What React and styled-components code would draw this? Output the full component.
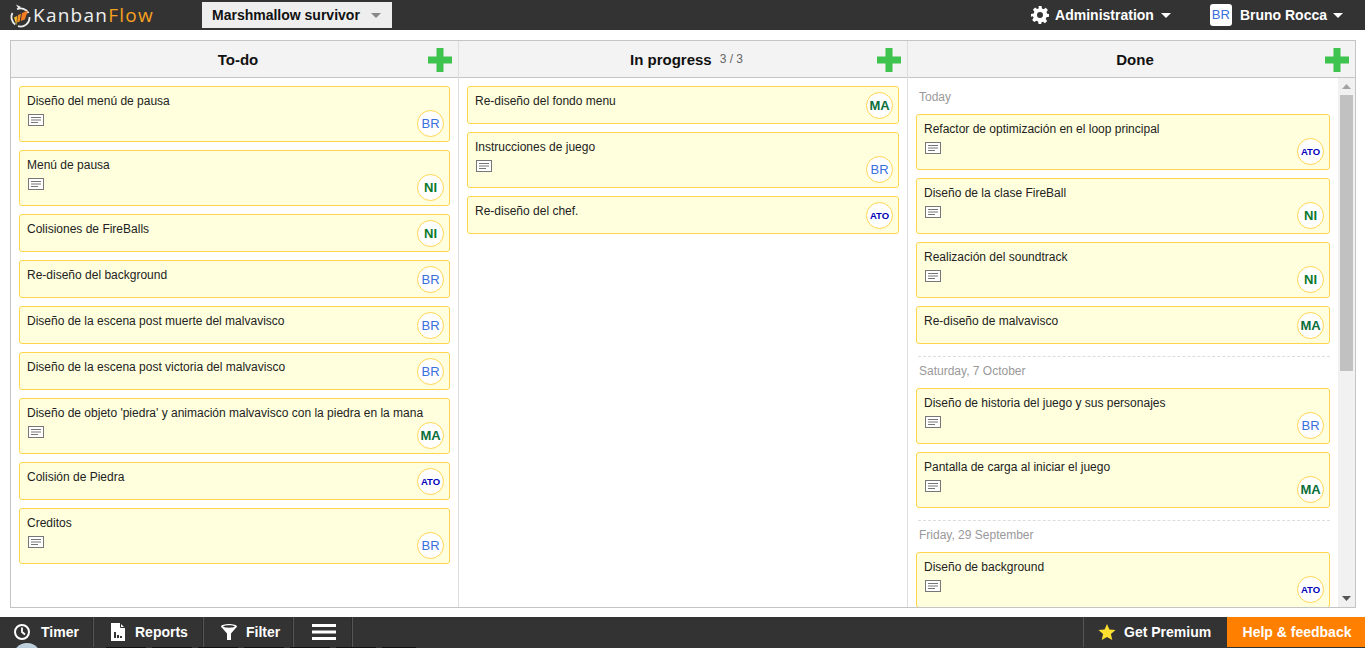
import React from "react";
import styled, { createGlobalStyle } from "styled-components";

const Global = createGlobalStyle`
  html, body { margin: 0; padding: 0; height: 100%; overflow: hidden; background: #fff; }
  body { font-family: "Liberation Sans", Arial, sans-serif; }
`;
const Page = styled.div`display:flex;flex-direction:column;height:648px;width:1365px;overflow:hidden;`;
const TopBar = styled.header`display:flex;align-items:center;height:30px;background:#333;flex:none;`;
const Logo = styled.div`display:flex;align-items:center;width:202px;padding-left:10px;box-sizing:border-box;`;
const LogoWord = styled.span`font:400 19px/30px "Open Sans",sans-serif;color:#eee;letter-spacing:1.25px;margin-left:2px;`;
const LogoFlow = styled.span`color:#f7a11e;`;
const BoardSelect = styled.div`display:flex;align-items:center;width:190px;height:26px;background:#eee;color:#111;font:bold 14px "Liberation Sans",sans-serif;padding-left:10px;box-sizing:border-box;`;
const Caret = styled.i`display:inline-block;width:0;height:0;border-left:5px solid transparent;border-right:5px solid transparent;border-top:5px solid ${p=>p.$c||"#fff"};margin-left:${p=>p.$m||6}px;`;
const Spacer = styled.div`flex:1;`;
const TopItem = styled.div`display:flex;align-items:center;color:#fff;font:bold 14px "Liberation Sans",sans-serif;margin-right:${p=>p.$mr||0}px;`;
const UserTile = styled.div`width:22px;height:22px;border-radius:3px;background:#fff;color:#3a6fdc;font:13px/22px "Liberation Sans",sans-serif;text-align:center;margin-right:8px;`;

const Board = styled.main`flex:1;margin:10px 9px 9px 10px;border:1px solid #c4c4c4;display:grid;grid-template-columns:447px 449px 1fr;min-height:0;overflow:hidden;`;
const Column = styled.section`display:flex;flex-direction:column;min-width:0;min-height:0;border-left:${p=>p.$first?"none":"1px solid #ddd"};`;
const ColHead = styled.div`position:relative;flex:none;height:36px;padding-left:7px;background:#f3f3f3;border-bottom:1px solid #c4c4c4;display:flex;align-items:center;justify-content:center;font:bold 15px "Liberation Sans",sans-serif;color:#111;`;
const Count = styled.span`font:12px "Liberation Sans",sans-serif;color:#666;margin-left:8px;`;
const Plus = styled.svg`position:absolute;right:6px;top:7px;width:24px;height:24px;`;
const ColBody = styled.div`flex:1;display:flex;min-height:0;overflow:hidden;`;
const List = styled.div`flex:1;min-width:0;display:flex;flex-direction:column;gap:8px;padding:8px 8px 0;box-sizing:border-box;`;
const Card = styled.article`position:relative;flex:none;box-sizing:border-box;height:${p=>p.$tall?56:38}px;background:#ffffdd;border:1px solid #ffd54f;border-radius:3px;padding:7px 7px;font:12px/14px "Liberation Sans",sans-serif;color:#222;`;
const NoteIcon = styled.svg`display:block;width:16px;height:12px;margin:6px 0 0 1px;`;
const Avatar = styled.div`position:absolute;right:5px;bottom:4px;box-sizing:border-box;width:27px;height:27px;border-radius:50%;background:#fff;border:1px solid #ffd54f;display:flex;align-items:center;justify-content:center;font:${p=>p.$w||"normal"} ${p=>p.$s||13}px "Liberation Sans",sans-serif;color:${p=>p.$c};`;
const DayLabel = styled.div`flex:none;font:12px/12px "Liberation Sans",sans-serif;color:#999;padding-left:3px;height:15px;margin-top:${p=>p.$first?5:0}px;`;
const Rule = styled.div`flex:none;border-top:1px dashed #ddd;margin:4px 0 0 2px;`;
const Scroll = styled.div`flex:none;width:17px;background:#f1f1f1;display:flex;flex-direction:column;align-items:center;`;
const ScrollBtn = styled.div`flex:none;height:17px;display:flex;align-items:center;justify-content:center;`;
const Thumb = styled.div`flex:none;width:13px;height:276px;background:#c1c1c1;`;
const ScrollGap = styled.div`flex:1;`;

const BottomBar = styled.footer`position:relative;flex:none;box-sizing:border-box;height:31px;padding-bottom:1px;background:#333;display:flex;align-items:stretch;color:#fff;font:bold 14px "Liberation Sans",sans-serif;`;
const BarItem = styled.div`display:flex;align-items:center;box-sizing:border-box;width:${p=>p.$w}px;padding-left:${p=>p.$pl}px;border-right:1px solid #555;box-shadow:inset -1px 0 #2a2a2a;gap:${p=>p.$g||8}px;`;
const BarGap = styled.div`flex:1;`;
const Premium = styled.div`display:flex;align-items:center;width:144px;box-sizing:border-box;padding-left:14px;gap:8px;border-left:1px solid #555;`;
const Help = styled.div`display:flex;align-items:center;justify-content:center;width:138px;padding-left:2px;box-sizing:border-box;background:#ff8000;`;
const Peek = styled.div`position:absolute;left:13px;top:26px;width:28px;height:28px;border-radius:50%;background:linear-gradient(#c4d4df,#7ea3bd);`;
const Strip = styled.div`position:absolute;left:106px;bottom:0;width:310px;height:1px;background:repeating-linear-gradient(90deg,#111 0 40px,#333 40px 46px);`;

const BR = {t:"BR",c:"#3a6fdc"}, NI={t:"NI",c:"#0a7a2a",w:"bold"}, MA={t:"MA",c:"#0a6f3a",w:"bold"}, ATO={t:"ATO",c:"#0000b8",w:"bold",s:9.5};

const Note = () => <NoteIcon viewBox="0 0 16 12"><rect x=".5" y=".5" width="15" height="11" fill="#fff" stroke="#777"/><path d="M3 3.500h10M3 6h10M3 8.500h7" stroke="#777" strokeWidth="1"/></NoteIcon>;
const Task = ({t,a,n}) => <Card $tall={n}>{t}{n && <Note/>}<Avatar $c={a.c} $w={a.w} $s={a.s}>{a.t}</Avatar></Card>;
const PlusIcon = () => <Plus viewBox="0 0 24 24"><path d="M8.500 0h7v8.500H24v7h-8.500V24h-7v-8.500H0v-7h8.500z" fill="#3fc34f"/></Plus>;
const Tri = ({d}) => <svg width="9" height="5" viewBox="0 0 9 5"><path d={d?"M0 0h9L4.500 5z":"M0 5h9L4.500 0z"} fill={d?"#555":"#a3a3a3"}/></svg>;

export default function App(){return <Page><Global/>
<TopBar>
  <Logo>
    <svg width="21" height="25" viewBox="0 0 21 25" style={{flex:"none"}}>
      <path d="M7 6.200A9 9 0 0 1 18.500 10M19.500 14A9 9 0 0 1 8 23.200M5.300 21.500A9 9 0 0 1 2.500 10" fill="none" stroke="#eee" strokeWidth="1.800"/>
      <path d="M8.500 5.800L6 1.500l5 2.500z" fill="#eee"/>
      <path d="M4 14.500l3-1.500-.5 9.500z" fill="#f9c02d"/>
      <path d="M7.800 12.500l3.200-2-1.300 8-2.500 1z" fill="#f7931e"/>
      <path d="M12 10l6-2.500-3.200 9-4 1.500z" fill="#f47c20"/>
    </svg>
    <LogoWord>Kanban<LogoFlow>Flow</LogoFlow></LogoWord>
  </Logo>
  <BoardSelect>Marshmallow survivor<Caret $c="#888" $m={11}/></BoardSelect>
  <Spacer/>
  <TopItem $mr={39}>
    <svg width="18" height="18" viewBox="0 0 24 24" style={{marginRight:6}}><path fill="#fff" fillRule="evenodd" d="M10 0h4l.6 3.300 2.300 1 2.800-1.900 2.800 2.800-1.900 2.800 1 2.300L24 10.600v3.800l-3.400.6-1 2.300 1.900 2.800-2.800 2.800-2.800-1.900-2.300 1L13.900 24h-3.800l-.6-3.500-2.300-1-2.800 1.900-2.800-2.800 1.900-2.800-1-2.300L0 14.400v-3.800l3.500-.6 1-2.300-1.900-2.800 2.800-2.800 2.800 1.900 2.300-1zM12 8a4 4 0 1 0 0 8 4 4 0 0 0 0-8z"/></svg>
    Administration<Caret $m={7}/>
  </TopItem>
  <TopItem $mr={22}><UserTile>BR</UserTile>Bruno Rocca<Caret/></TopItem>
</TopBar>
<Board>
  <Column $first><ColHead>To-do<PlusIcon/></ColHead><ColBody><List>
    <Task t="Diseño del menú de pausa" a={BR} n/>
    <Task t="Menú de pausa" a={NI} n/>
    <Task t="Colisiones de FireBalls" a={NI}/>
    <Task t="Re-diseño del background" a={BR}/>
    <Task t="Diseño de la escena post muerte del malvavisco" a={BR}/>
    <Task t="Diseño de la escena post victoria del malvavisco" a={BR}/>
    <Task t="Diseño de objeto 'piedra' y animación malvavisco con la piedra en la mana" a={MA} n/>
    <Task t="Colisión de Piedra" a={ATO}/>
    <Task t="Creditos" a={BR} n/>
  </List></ColBody></Column>
  <Column><ColHead>In progress<Count>3 / 3</Count><PlusIcon/></ColHead><ColBody><List>
    <Task t="Re-diseño del fondo menu" a={MA}/>
    <Task t="Instrucciones de juego" a={BR} n/>
    <Task t="Re-diseño del chef." a={ATO}/>
  </List></ColBody></Column>
  <Column><ColHead>Done<PlusIcon/></ColHead><ColBody><List>
    <DayLabel $first>Today</DayLabel>
    <Task t="Refactor de optimización en el loop principal" a={ATO} n/>
    <Task t="Diseño de la clase FireBall" a={NI} n/>
    <Task t="Realización del soundtrack" a={NI} n/>
    <Task t="Re-diseño de malvavisco" a={MA}/>
    <Rule/>
    <DayLabel>Saturday, 7 October</DayLabel>
    <Task t="Diseño de historia del juego y sus personajes" a={BR} n/>
    <Task t="Pantalla de carga al iniciar el juego" a={MA} n/>
    <Rule/>
    <DayLabel>Friday, 29 September</DayLabel>
    <Task t="Diseño de background" a={ATO} n/>
  </List><Scroll><ScrollBtn><Tri/></ScrollBtn><Thumb/><ScrollGap/><ScrollBtn><Tri d/></ScrollBtn></Scroll></ColBody></Column>
</Board>
<BottomBar>
  <BarItem $w={94} $pl={13} $g={10}><svg width="18" height="18" viewBox="0 0 18 18"><circle cx="9" cy="9" r="7" fill="none" stroke="#fff" strokeWidth="2"/><path d="M9 4.500V9l3 2.500" fill="none" stroke="#fff" strokeWidth="1.800"/></svg>Timer</BarItem>
  <BarItem $w={110} $pl={16} $g={9}><svg width="16" height="18" viewBox="0 0 16 18"><path fill="#fff" fillRule="evenodd" d="M1 0h9l5 5v13H1zM4 9v6h2V9zM7 12v3h2v-3zM10 13v2h2v-2z"/><path d="M10.500 0v4.500H15" fill="none" stroke="#333"/></svg>Reports</BarItem>
  <BarItem $w={90} $pl={16} $g={8}><svg width="18" height="18" viewBox="0 0 18 18"><path fill="#fff" fillRule="evenodd" d="M1 3.500C1 2 5 1 9 1s8 1 8 2.500c0 .5-.5 1-1 1.300L11 10.500V17H7v-6.500L2 4.800c-.5-.3-1-.8-1-1.300zM3 3.500C4 4.300 6.500 4.700 9 4.700s5-.4 6-1.200C14 2.700 11.500 2.300 9 2.300S4 2.700 3 3.500z"/></svg>Filter</BarItem>
  <BarItem $w={59} $pl={18}><svg width="24" height="18" viewBox="0 0 24 18"><path fill="#fff" d="M0 1h24v3H0zM0 7.500h24v3H0zM0 14h24v3H0z"/></svg></BarItem>
  <BarGap/>
  <Premium><svg width="18" height="18" viewBox="0 0 18 18"><path fill="#fde02f" d="M9 1l2.400 5.600 6.100.5-4.600 4 1.400 6L9 14l-5.300 3.100 1.400-6-4.600-4 6.100-.5z"/></svg>Get Premium</Premium>
  <Help>Help &amp; feedback</Help>
  <Peek/>
  <Strip/>
</BottomBar>
</Page>}
